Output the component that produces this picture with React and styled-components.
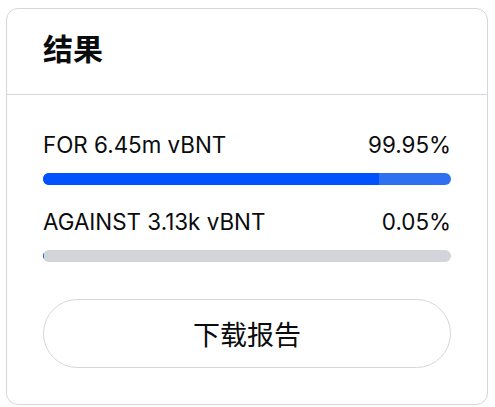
import React from "react";
import styled, { createGlobalStyle } from "styled-components";

const Global = createGlobalStyle`
  html, body { margin: 0; padding: 0; background: #ffffff; }
  body { font-family: Inter, "Noto Sans CJK SC", sans-serif; color: #0a0b0d; }
`;

const Page = styled.div`
  padding: 8px 7px 2px 6px;
`;

const Card = styled.section`
  border: 1px solid #d5d6db;
  border-radius: 12px;
  background: #fff;
  height: 397px;
  box-sizing: border-box;
  display: flex;
  flex-direction: column;
`;

const Header = styled.header`
  height: 86px;
  box-sizing: border-box;
  padding: 20px 36px 0;
  border-bottom: 1px solid #d5d6db;
`;

const Title = styled.h2`
  margin: 0;
  font-family: "Noto Sans CJK SC", sans-serif;
  font-size: 30px;
  font-weight: 700;
  line-height: 36px;
`;

const Body = styled.div`
  padding: 35px 36px 36px;
  display: flex;
  flex-direction: column;
`;

const Result = styled.div`
  display: flex;
  flex-direction: column;
  gap: 13px;
  margin-bottom: 22px;
`;

const Row = styled.div`
  display: flex;
  justify-content: space-between;
  align-items: baseline;
  font-size: 22.4px;
  line-height: 30px;
`;

const Track = styled.div`
  height: 12px;
  border-radius: 6px;
  overflow: hidden;
  display: flex;
  background: ${(p) => p.$bg};
`;

const Fill = styled.div`
  height: 100%;
  background: ${(p) => p.$color};
`;

const Button = styled.button`
  margin-top: 15px;
  height: 69px;
  border: 1px solid #d5d6db;
  border-radius: 999px;
  background: #fff;
  font-family: "Noto Sans CJK SC", sans-serif;
  font-size: 27px;
  color: #0a0b0d;
  cursor: pointer;
`;

export default function App() {
  return (
    <Page>
      <Global />
      <Card>
        <Header>
          <Title>结果</Title>
        </Header>
        <Body>
          <Result>
            <Row>
              <span>FOR 6.45m vBNT</span>
              <span>99.95%</span>
            </Row>
            <Track $bg="#2f6ff2">
              <Fill $color="#0052ff" style={{ width: "82.3%" }} />
            </Track>
          </Result>
          <Result>
            <Row>
              <span>AGAINST 3.13k vBNT</span>
              <span>0.05%</span>
            </Row>
            <Track $bg="#d1d4d8">
              <Fill $color="#0052ff" style={{ width: "1px" }} />
            </Track>
          </Result>
          <Button>下载报告</Button>
        </Body>
      </Card>
    </Page>
  );
}
